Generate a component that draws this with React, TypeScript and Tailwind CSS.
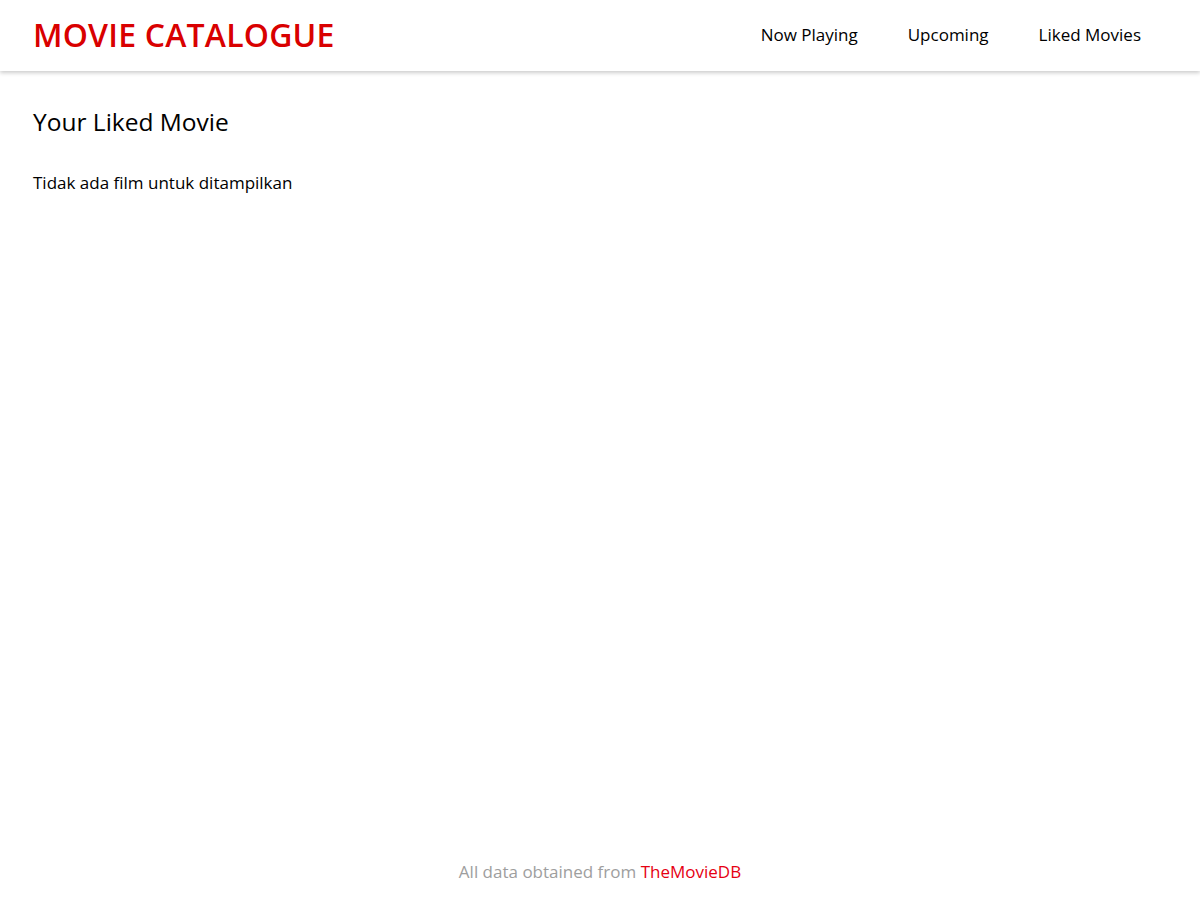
const navLinks = ['Now Playing', 'Upcoming', 'Liked Movies'];

export default function App() {
    return (
        <div className="min-h-screen flex flex-col bg-white text-black font-['Open_Sans',sans-serif]">
            <header className="h-[71px] flex items-center justify-between pl-[33px] pr-[59px] bg-white shadow-[0_2px_4px_rgba(0,0,0,0.2)]">
                <a href="#" className="text-[32px] font-semibold text-[#d90000] tracking-[0.2px] leading-none pb-[1px]">
                    MOVIE CATALOGUE
                </a>
                <nav className="flex gap-[50px] text-[17px] pb-[2px]">
                    {navLinks.map((link) => (
                        <a key={link} href="#" className="text-black">
                            {link}
                        </a>
                    ))}
                </nav>
            </header>
            <main className="flex-1 px-[33px] pt-[36px]">
                <h2 className="text-[24.5px] leading-[30px]">Your Liked Movie</h2>
                <p className="mt-[34px] text-[17px] leading-[24px]">Tidak ada film untuk ditampilkan</p>
            </main>
            <footer className="h-[58px] text-center text-[17px] leading-[24px] text-[#9e9e9e] pt-[18px]">
                All data obtained from <a href="#" className="text-[#e60012]">TheMovieDB</a>
            </footer>
        </div>
    );
}
